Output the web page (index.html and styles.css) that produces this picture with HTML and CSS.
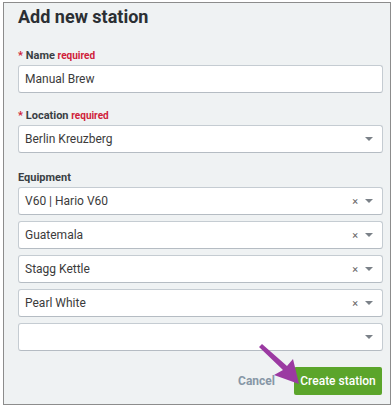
FILE: index.html
```html
<!DOCTYPE html>
<html lang="en">
<head>
  <meta charset="utf-8">
  <title>Add new station</title>
  <link rel="stylesheet" href="styles.css">
</head>
<body>
<div class="modal">
  <h1 class="modal-title">Add new station</h1>

  <div class="field field-name">
    <label class="field-label"><span class="star">*</span> Name <span class="req">required</span></label>
    <div class="input">Manual Brew</div>
  </div>

  <div class="field field-location">
    <label class="field-label"><span class="star">*</span> Location <span class="req">required</span></label>
    <div class="input select">
      <span class="value">Berlin Kreuzberg</span>
      <span class="caret"></span>
    </div>
  </div>

  <div class="field field-equipment">
    <label class="field-label">Equipment</label>
    <div class="equipment-list">
      <div class="input select">
        <span class="value">V60 | Hario V60</span>
        <span class="clear">×</span>
        <span class="caret"></span>
      </div>
      <div class="input select">
        <span class="value">Guatemala</span>
        <span class="clear">×</span>
        <span class="caret"></span>
      </div>
      <div class="input select">
        <span class="value">Stagg Kettle</span>
        <span class="clear">×</span>
        <span class="caret"></span>
      </div>
      <div class="input select">
        <span class="value">Pearl White</span>
        <span class="clear">×</span>
        <span class="caret"></span>
      </div>
      <div class="input select">
        <span class="value"></span>
        <span class="caret"></span>
      </div>
    </div>
  </div>

  <div class="actions">
    <button class="btn-cancel">Cancel</button>
    <button class="btn-create">Create station</button>
  </div>

  <!-- annotation arrow pointing at the button -->
  <svg class="pointer" width="60" height="50" viewBox="0 0 60 50">
    <polygon points="3,5 6,2 31,24 37,17 43,42 18,33 27,28" fill="#9b3aa2"/>
  </svg>
</div>
</body>
</html>
```

FILE: styles.css
```css
html, body {
    margin: 0;
    background: #fff;
}

body {
    font-family: Roboto, "Liberation Sans", sans-serif;
    color: #333;
}

.modal {
    position: relative;
    box-sizing: border-box;
    width: 388px;
    height: 403px;
    margin: 2px 0 0 3px;
    padding: 3px 7px 0 14px;
    border: 1px solid #8c8c8c;
    background: #eff2f3;
}

.modal-title {
    margin: 0;
    font-size: 18px;
    line-height: 22px;
    font-weight: 700;
    color: #2b2f33;
}

.field-label {
    display: block;
    font-size: 11px;
    line-height: 14px;
    font-weight: 700;
    color: #3a3f44;
    margin-bottom: 2px;
}

.field-name {
    margin-top: 21px;
}

.field-location {
    margin-top: 16px;
}

.field-equipment {
    margin-top: 18px;
}

.star {
    color: #d0213a;
}

.req {
    color: #d0213a;
    font-size: 10px;
}

.input {
    box-sizing: border-box;
    height: 28px;
    display: flex;
    align-items: center;
    padding: 0 9px 0 6px;
    background: #fff;
    border: 1px solid #c5ccd2;
    border-bottom-color: #b5bcc3;
    border-radius: 3px;
    font-size: 12px;
    color: #3b3b3b;
}

.select .value {
    flex: 1;
}

.clear {
    font-size: 11px;
    color: #666;
    margin-right: 7px;
    line-height: 1;
}

.caret {
    width: 0;
    height: 0;
    border-left: 4px solid transparent;
    border-right: 4px solid transparent;
    border-top: 4px solid #7b8188;
}

.equipment-list {
    display: flex;
    flex-direction: column;
    gap: 6px;
}

.actions {
    display: flex;
    justify-content: flex-end;
    align-items: center;
    margin-top: 16px;
    padding-right: 1px;
}

.actions button {
    font-family: inherit;
    font-size: 12px;
    border: 0;
    cursor: pointer;
}

.btn-cancel {
    background: none;
    color: #8797a6;
    font-weight: 700;
    padding: 0;
    margin-right: 19px;
}

.btn-create {
    width: 88px;
    height: 28px;
    background: #5ba52b;
    color: #fff;
    font-weight: 500;
    border-radius: 2px;
    padding: 0;
}

.pointer {
    position: absolute;
    left: 252px;
    top: 339px;
}
```
